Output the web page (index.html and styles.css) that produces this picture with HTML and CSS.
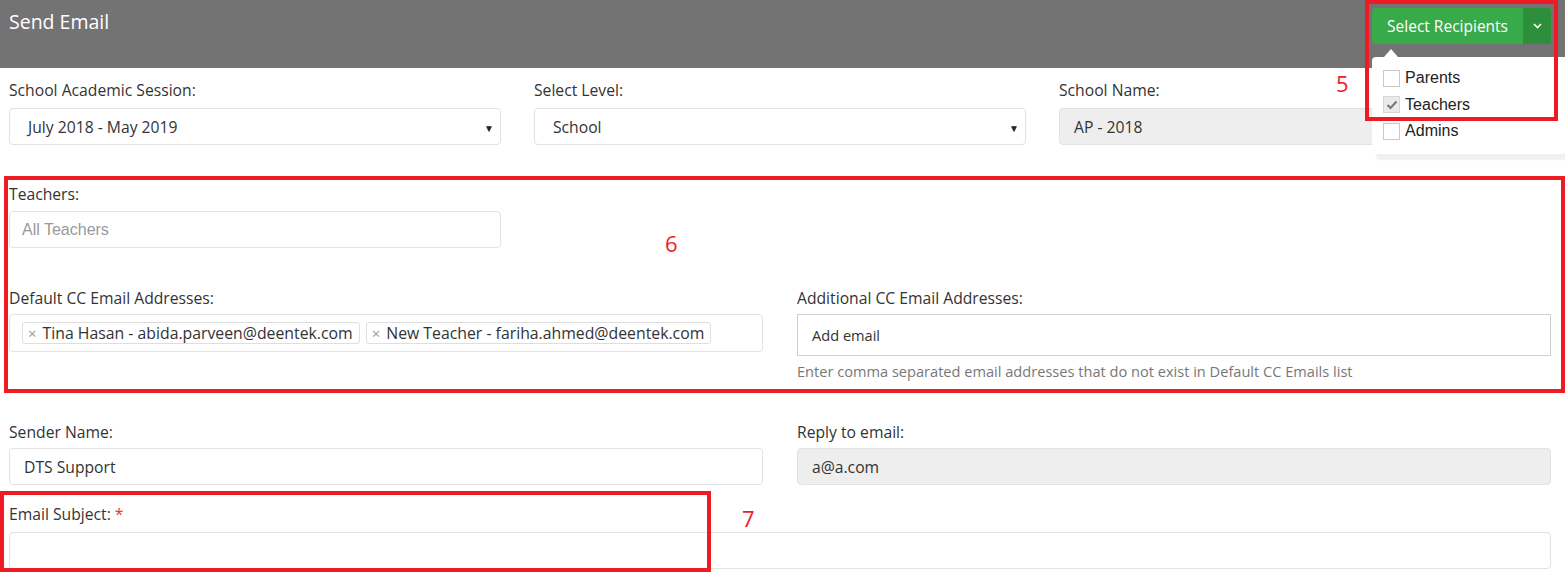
FILE: index.html
```html
<!DOCTYPE html>
<html lang="en">
<head>
    <meta charset="UTF-8">
    <meta name="viewport" content="width=device-width, initial-scale=1.0">
    <title>Send Email</title>
    <link rel="stylesheet" href="styles.css">
</head>
<body>
<div class="page">
    <div class="topbar">
        <div class="page-title">Send Email</div>
        <div class="recipients">
            <div class="btn-group">
                <button class="btn-green">Select Recipients</button>
                <button class="btn-green btn-caret">
                    <svg width="9" height="6" viewBox="0 0 9 6"><path d="M1 1l3.5 3.5L8 1" fill="none" stroke="#fff" stroke-width="1.6"/></svg>
                </button>
            </div>
            <div class="recipients-menu">
                <div class="check-item"><span class="checkbox"></span>Parents</div>
                <div class="check-item"><span class="checkbox checked">
                    <svg width="12" height="10" viewBox="0 0 12 10"><path d="M1.5 5l3 3L10.5 1.5" fill="none" stroke="#777" stroke-width="2"/></svg>
                </span>Teachers</div>
                <div class="check-item"><span class="checkbox"></span>Admins</div>
            </div>
        </div>
    </div>

    <div class="send-form">
        <div class="row row-3 first-row">
            <div class="field">
                <div class="field-label">School Academic Session:</div>
                <div class="form-control select-box">July 2018 - May 2019<span class="caret">&#9660;</span></div>
            </div>
            <div class="field">
                <div class="field-label">Select Level:</div>
                <div class="form-control select-box">School<span class="caret">&#9660;</span></div>
            </div>
            <div class="field">
                <div class="field-label">School Name:</div>
                <div class="form-control readonly">AP - 2018</div>
            </div>
        </div>

        <div class="row row-3 teachers-row">
            <div class="field">
                <div class="field-label">Teachers:</div>
                <div class="form-control multi-select"><span class="placeholder">All Teachers</span></div>
            </div>
        </div>

        <div class="row row-2 cc-row">
            <div class="field">
                <div class="field-label">Default CC Email Addresses:</div>
                <div class="form-control tag-box">
                    <span class="tag"><span class="tag-x">&times;</span>Tina Hasan - abida.parveen@deentek.com</span>
                    <span class="tag"><span class="tag-x">&times;</span>New Teacher - fariha.ahmed@deentek.com</span>
                </div>
            </div>
            <div class="field">
                <div class="field-label">Additional CC Email Addresses:</div>
                <div class="form-control email-input">Add email</div>
                <div class="help-text">Enter comma separated email addresses that do not exist in Default CC Emails list</div>
            </div>
        </div>

        <div class="row row-2 sender-row">
            <div class="field">
                <div class="field-label">Sender Name:</div>
                <div class="form-control">DTS Support</div>
            </div>
            <div class="field">
                <div class="field-label">Reply to email:</div>
                <div class="form-control readonly">a@a.com</div>
            </div>
        </div>

        <div class="row subject-row">
            <div class="field">
                <div class="field-label">Email Subject: <span class="required">*</span></div>
                <div class="form-control"></div>
            </div>
        </div>
    </div>

    <!-- annotation marks -->
    <div class="mark mark-5"></div>
    <div class="mark mark-6"></div>
    <div class="mark mark-7"></div>
    <div class="mark-num num-5">5</div>
    <div class="mark-num num-6">6</div>
    <div class="mark-num num-7">7</div>
</div>
</body>
</html>
```

FILE: styles.css
```css
body {
    margin: 0;
    padding: 0;
    background: #fff;
    font-family: "Open Sans", "Liberation Sans", Arial, sans-serif;
    color: #333;
    overflow: hidden;
}
.page {
    position: relative;
    width: 1565px;
    height: 583px;
}

/* header bar */
.topbar {
    position: relative;
    z-index: 5;
    height: 68px;
    box-sizing: border-box;
    background: #737373;
    display: flex;
    justify-content: space-between;
    align-items: flex-start;
    padding: 8px 14px 0 9px;
}
.page-title {
    color: #fff;
    font-size: 19.5px;
    line-height: 28px;
}
.recipients {
    position: relative;
}
.btn-group {
    display: flex;
    height: 36px;
    border-radius: 4px;
    overflow: hidden;
}
.btn-green {
    border: none;
    margin: 0;
    background: #39aa4a;
    color: #fff;
    font-family: "Open Sans", sans-serif;
    font-size: 15.5px;
    padding: 0 15px;
    cursor: pointer;
}
.btn-caret {
    width: 28px;
    padding: 0;
    background: #2d8f3c;
    display: flex;
    align-items: center;
    justify-content: center;
}
.recipients-menu {
    position: absolute;
    z-index: 6;
    top: 49px;
    left: 0;
    width: 205px;
    background: #fff;
    border-radius: 4px;
    padding: 8px 0 9px 11px;
    box-shadow: 4px 6px 2px rgba(0,0,0,0.06);
    font-family: "Liberation Sans", Arial, sans-serif;
    font-size: 16px;
    color: #222;
}
.recipients-menu::before {
    content: "";
    position: absolute;
    top: -8px;
    left: 12px;
    border-left: 7px solid transparent;
    border-right: 7px solid transparent;
    border-bottom: 8px solid #fff;
}
.check-item {
    display: flex;
    align-items: center;
    height: 26.5px;
}
.checkbox {
    width: 15px;
    height: 15px;
    border: 1px solid #c9c9c9;
    background: #fff;
    margin-right: 5px;
    display: flex;
    align-items: center;
    justify-content: center;
}
.checkbox.checked {
    background: #eaeaea;
    border-color: #d6d6d6;
}

/* form */
.send-form {
    padding: 0 14px 0 9px;
}
.row {
    display: grid;
    column-gap: 34px;
}
.row-3 {
    grid-template-columns: repeat(3, 1fr);
    column-gap: 33px;
}
.row-2 {
    grid-template-columns: 1fr 1fr;
}
.first-row { margin-top: 12px; }
.teachers-row { margin-top: 39px; }
.cc-row { margin-top: 40px; }
.sender-row { margin-top: 41px; }
.subject-row { margin-top: 19px; }

.field-label {
    font-size: 15.7px;
    line-height: 20px;
    margin-bottom: 8px;
}
.teachers-row .field-label {
    margin-bottom: 7px;
}
.cc-row .field-label,
.sender-row .field-label {
    margin-bottom: 6px;
}
.required {
    color: #e03434;
}
.form-control {
    position: relative;
    height: 37px;
    box-sizing: border-box;
    border: 1px solid #e2e2e2;
    border-radius: 4px;
    padding: 0 14px;
    display: flex;
    align-items: center;
    font-size: 15.7px;
    color: #333;
}
.select-box {
    padding-left: 18px;
}
.caret {
    position: absolute;
    right: 6px;
    top: 12px;
    font-size: 10px;
    color: #222;
}
.readonly {
    background: #eee;
}
.multi-select {
    padding-left: 12px;
}
.placeholder {
    font-family: "Liberation Sans", Arial, sans-serif;
    color: #999;
    font-size: 16px;
}
.tag-box {
    height: 38px;
    padding-left: 12px;
    gap: 6px;
}
.tag {
    display: flex;
    align-items: center;
    height: 22px;
    box-sizing: border-box;
    border: 1px solid #dedede;
    border-radius: 3px;
    padding: 0 6px 0 5px;
    font-size: 15.8px;
    white-space: nowrap;
}
.tag-x {
    color: #999;
    font-size: 15px;
    margin-right: 6px;
}
.email-input {
    height: 42px;
    border-color: #cfcfcf;
    border-radius: 0;
    font-size: 14.6px;
}
.help-text {
    margin-top: 6px;
    font-size: 14.6px;
    line-height: 19px;
    color: #777;
}

/* red annotation marks over the screenshot */
.mark {
    position: absolute;
    z-index: 10;
    box-sizing: border-box;
    border: 4px solid #ed1c24;
}
.mark-5 { left: 1365px; top: 0; width: 193px; height: 121px; }
.mark-6 { left: 4px; top: 176px; width: 1561px; height: 217px; }
.mark-7 { left: 0; top: 491px; width: 711px; height: 81px; }
.mark-num {
    position: absolute;
    z-index: 10;
    color: #ed1c24;
    font-size: 22px;
    line-height: 24px;
}
.num-5 { left: 1336px; top: 71px; }
.num-6 { left: 665px; top: 231px; }
.num-7 { left: 742px; top: 506px; }
```
